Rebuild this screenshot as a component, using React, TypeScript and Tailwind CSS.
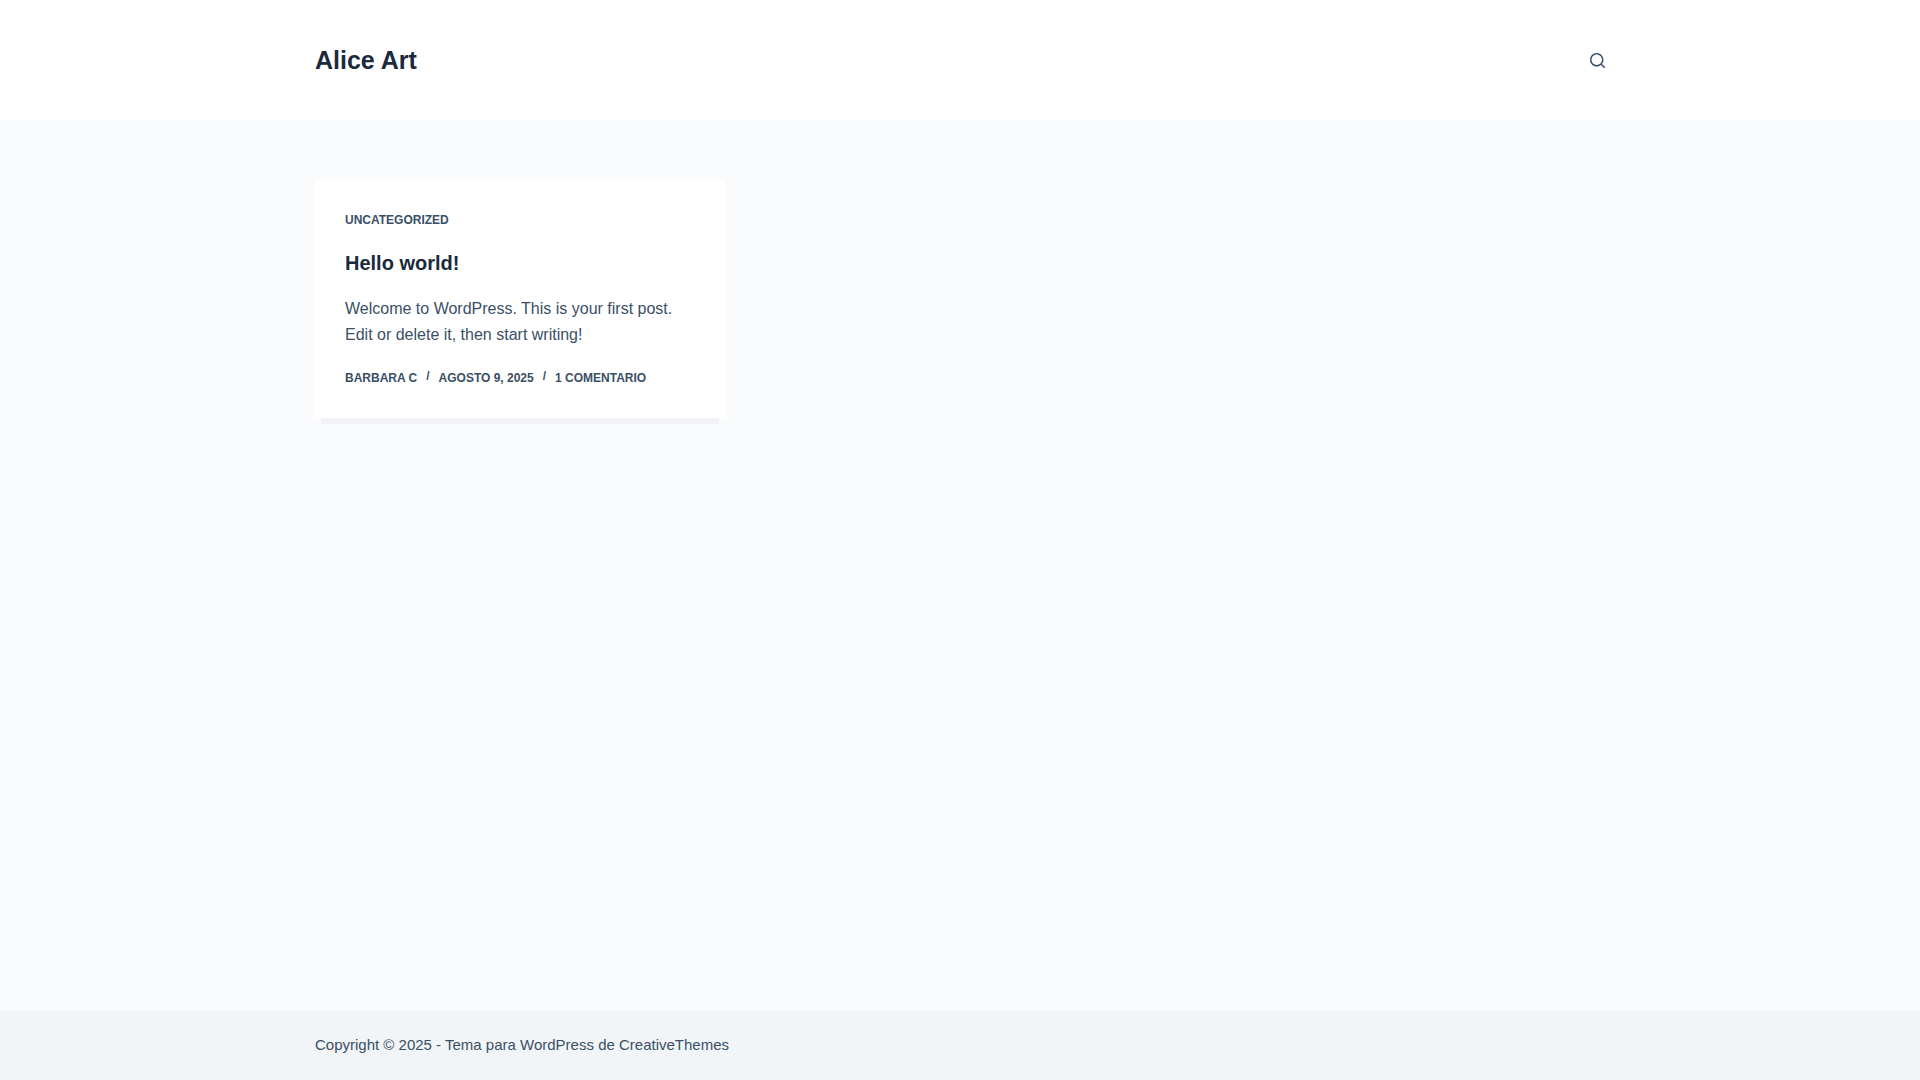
const POST = {
  category: 'Uncategorized',
  title: 'Hello world!',
  excerpt: 'Welcome to WordPress. This is your first post. Edit or delete it, then start writing!',
};

const POST_META = ['Barbara C', 'agosto 9, 2025', '1 comentario'];

function SearchIcon() {
  return (
    <svg width="15" height="15" viewBox="0 0 15 15" fill="currentColor" aria-hidden="true">
      <path d="M14.8,13.7L12,11c0.9-1.2,1.5-2.6,1.5-4.2c0-3.7-3-6.8-6.8-6.8S0,3,0,6.8s3,6.8,6.8,6.8c1.6,0,3.1-0.6,4.2-1.5l2.8,2.8c0.1,0.1,0.3,0.2,0.5,0.2s0.4-0.1,0.5-0.2C15.1,14.5,15.1,14,14.8,13.7z M1.5,6.8c0-2.9,2.4-5.2,5.2-5.2S12,3.9,12,6.8S9.6,12,6.8,12S1.5,9.6,1.5,6.8z" />
    </svg>
  );
}

function Header() {
  return (
    <header className="bg-white">
      <div className="mx-auto flex h-[120px] w-[88%] max-w-[1290px] items-center justify-between">
        <a href="#" className="text-[25px] leading-[37px] font-bold text-[#192a3d]">
          Alice Art
        </a>
        <button type="button" aria-label="Search" className="cursor-pointer text-[#3a4f66]">
          <SearchIcon />
        </button>
      </div>
    </header>
  );
}

function PostCard() {
  return (
    <article className="flex flex-col bg-white p-[30px] shadow-[0px_12px_0px_-6px_rgba(34,56,101,0.04)]">
      <a href="#" className="self-start text-xs leading-5 font-bold uppercase">
        {POST.category}
      </a>
      <h2 className="mt-5 text-xl leading-[26px] font-bold text-[#192a3d]">
        <a href="#">{POST.title}</a>
      </h2>
      <p className="mt-5 text-base leading-[26px]">{POST.excerpt}</p>
      <ul className="mt-5 flex text-xs leading-5 font-bold uppercase">
        {POST_META.map((item, i) => (
          <li key={item} className="flex items-start">
            {i > 0 && <span className="px-[9px] leading-4">/</span>}
            <a href="#">{item}</a>
          </li>
        ))}
      </ul>
    </article>
  );
}

export default function App() {
  return (
    <div className="flex min-h-screen flex-col bg-[#fafbfc] font-['Liberation_Sans',Arial,sans-serif] text-[#3a4f66]">
      <Header />
      <main className="mx-auto w-[88%] max-w-[1290px] grow py-[60px]">
        <div className="grid grid-cols-1 items-start gap-[30px] md:grid-cols-2 lg:grid-cols-3">
          <PostCard />
        </div>
      </main>
      <footer className="bg-[#f2f5f7]">
        <div className="mx-auto flex h-[69px] w-[88%] max-w-[1290px] items-center text-[15px]">
          <p>
            Copyright © 2025 - Tema para WordPress de <a href="#">CreativeThemes</a>
          </p>
        </div>
      </footer>
    </div>
  );
}
